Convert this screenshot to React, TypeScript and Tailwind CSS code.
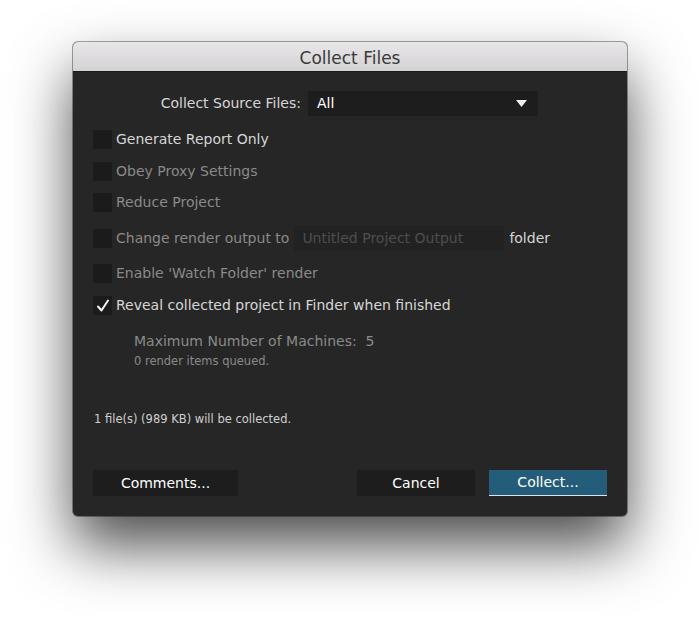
const font = { fontFamily: '"DejaVu Sans", "Liberation Sans", sans-serif' };

function Box({ checked }: { checked?: boolean }) {
  return (
    <div className="flex h-[19px] w-[19px] shrink-0 items-center justify-center bg-[#1b1b1b]">
      {checked ? (
        <svg width="14" height="14" viewBox="0 0 14 14" fill="none">
          <path d="M2 7.5 L5.5 11.5 L12 1.5" stroke="#f2f2f2" strokeWidth="2" strokeLinecap="round" strokeLinejoin="round" />
        </svg>
      ) : null}
    </div>
  );
}

function Row({ label, bright, checked, className }: { label: string; bright?: boolean; checked?: boolean; className?: string }) {
  return (
    <div className={`flex items-center gap-[4px] ${className ?? ""}`}>
      <Box checked={checked} />
      <span className={`text-[14px] leading-[19px] ${bright ? "text-[#d6d6d6]" : "text-[#8a8a8a]"}`}>{label}</span>
    </div>
  );
}

export default function App() {
  return (
    <div className="min-h-[621px] bg-white pt-[42px]" style={font}>
      <div className="mx-auto flex h-[474px] w-[554px] flex-col overflow-hidden rounded-[5px] bg-[#262626] shadow-[0_30px_60px_rgba(0,0,0,0.7),0_0_0_1px_rgba(0,0,0,0.35)]">
        <div className="flex h-[30px] shrink-0 items-center justify-center border-b border-[#1a1a1a] bg-gradient-to-b from-[#e8e6e8] to-[#d4d2d4] pt-[3px] text-[17px] leading-[20px] text-[#3a3a3a]">
          Collect Files
        </div>
        <div className="flex flex-1 flex-col px-[20px]">
          <div className="mt-[19px] flex items-center">
            <span className="w-[215px] pr-[7px] text-right text-[14px] leading-[19px] text-[#d6d6d6]">Collect Source Files:</span>
            <div className="flex h-[25px] w-[230px] items-center justify-between bg-[#1d1d1d] pl-[9px] pr-[11px]">
              <span className="text-[14px] leading-[19px] text-white">All</span>
              <svg width="11" height="8" viewBox="0 0 11 8">
                <path d="M0 0 H11 L5.5 7 Z" fill="#f0f0f0" />
              </svg>
            </div>
          </div>
          <Row label="Generate Report Only" bright className="mt-[14px]" />
          <Row label="Obey Proxy Settings" className="mt-[13px]" />
          <Row label="Reduce Project" className="mt-[12px]" />
          <div className="mt-[14px] flex items-center gap-[4px]">
            <Box />
            <span className="text-[14px] leading-[19px] text-[#8a8a8a]">Change render output to</span>
            <div className="ml-[1px] flex h-[25px] w-[210px] items-center bg-[#222222] pl-[8px] text-[14px] leading-[19px] text-[#4e4e4e]">
              Untitled Project Output
            </div>
            <span className="ml-[1px] text-[14px] leading-[19px] text-[#d6d6d6]">folder</span>
          </div>
          <Row label="Enable 'Watch Folder' render" className="mt-[13px]" />
          <Row label="Reveal collected project in Finder when finished" bright checked className="mt-[13px]" />
          <div className="mt-[17px] pl-[41px] text-[14px] leading-[19px] text-[#8a8a8a]">
            Maximum Number of Machines:&nbsp;&nbsp;5
          </div>
          <div className="mt-[2px] pl-[41px] text-[11.5px] leading-[16px] text-[#8a8a8a]">0 render items queued.</div>
          <div className="mt-[42px] pl-[1px] text-[11.5px] leading-[16px] text-[#cfcfcf]">1 file(s) (989 KB) will be collected.</div>
          <div className="mt-[43px] flex items-center">
            <button className="h-[26px] w-[145px] bg-[#1d1d1d] text-[14px] text-white">Comments...</button>
            <div className="flex-1" />
            <button className="h-[26px] w-[118px] bg-[#1d1d1d] text-[14px] text-white">Cancel</button>
            <button className="ml-[14px] h-[26px] w-[118px] border-b border-[#d8e4ea] bg-[#245d79] text-[14px] text-white">
              Collect...
            </button>
          </div>
        </div>
      </div>
    </div>
  );
}
